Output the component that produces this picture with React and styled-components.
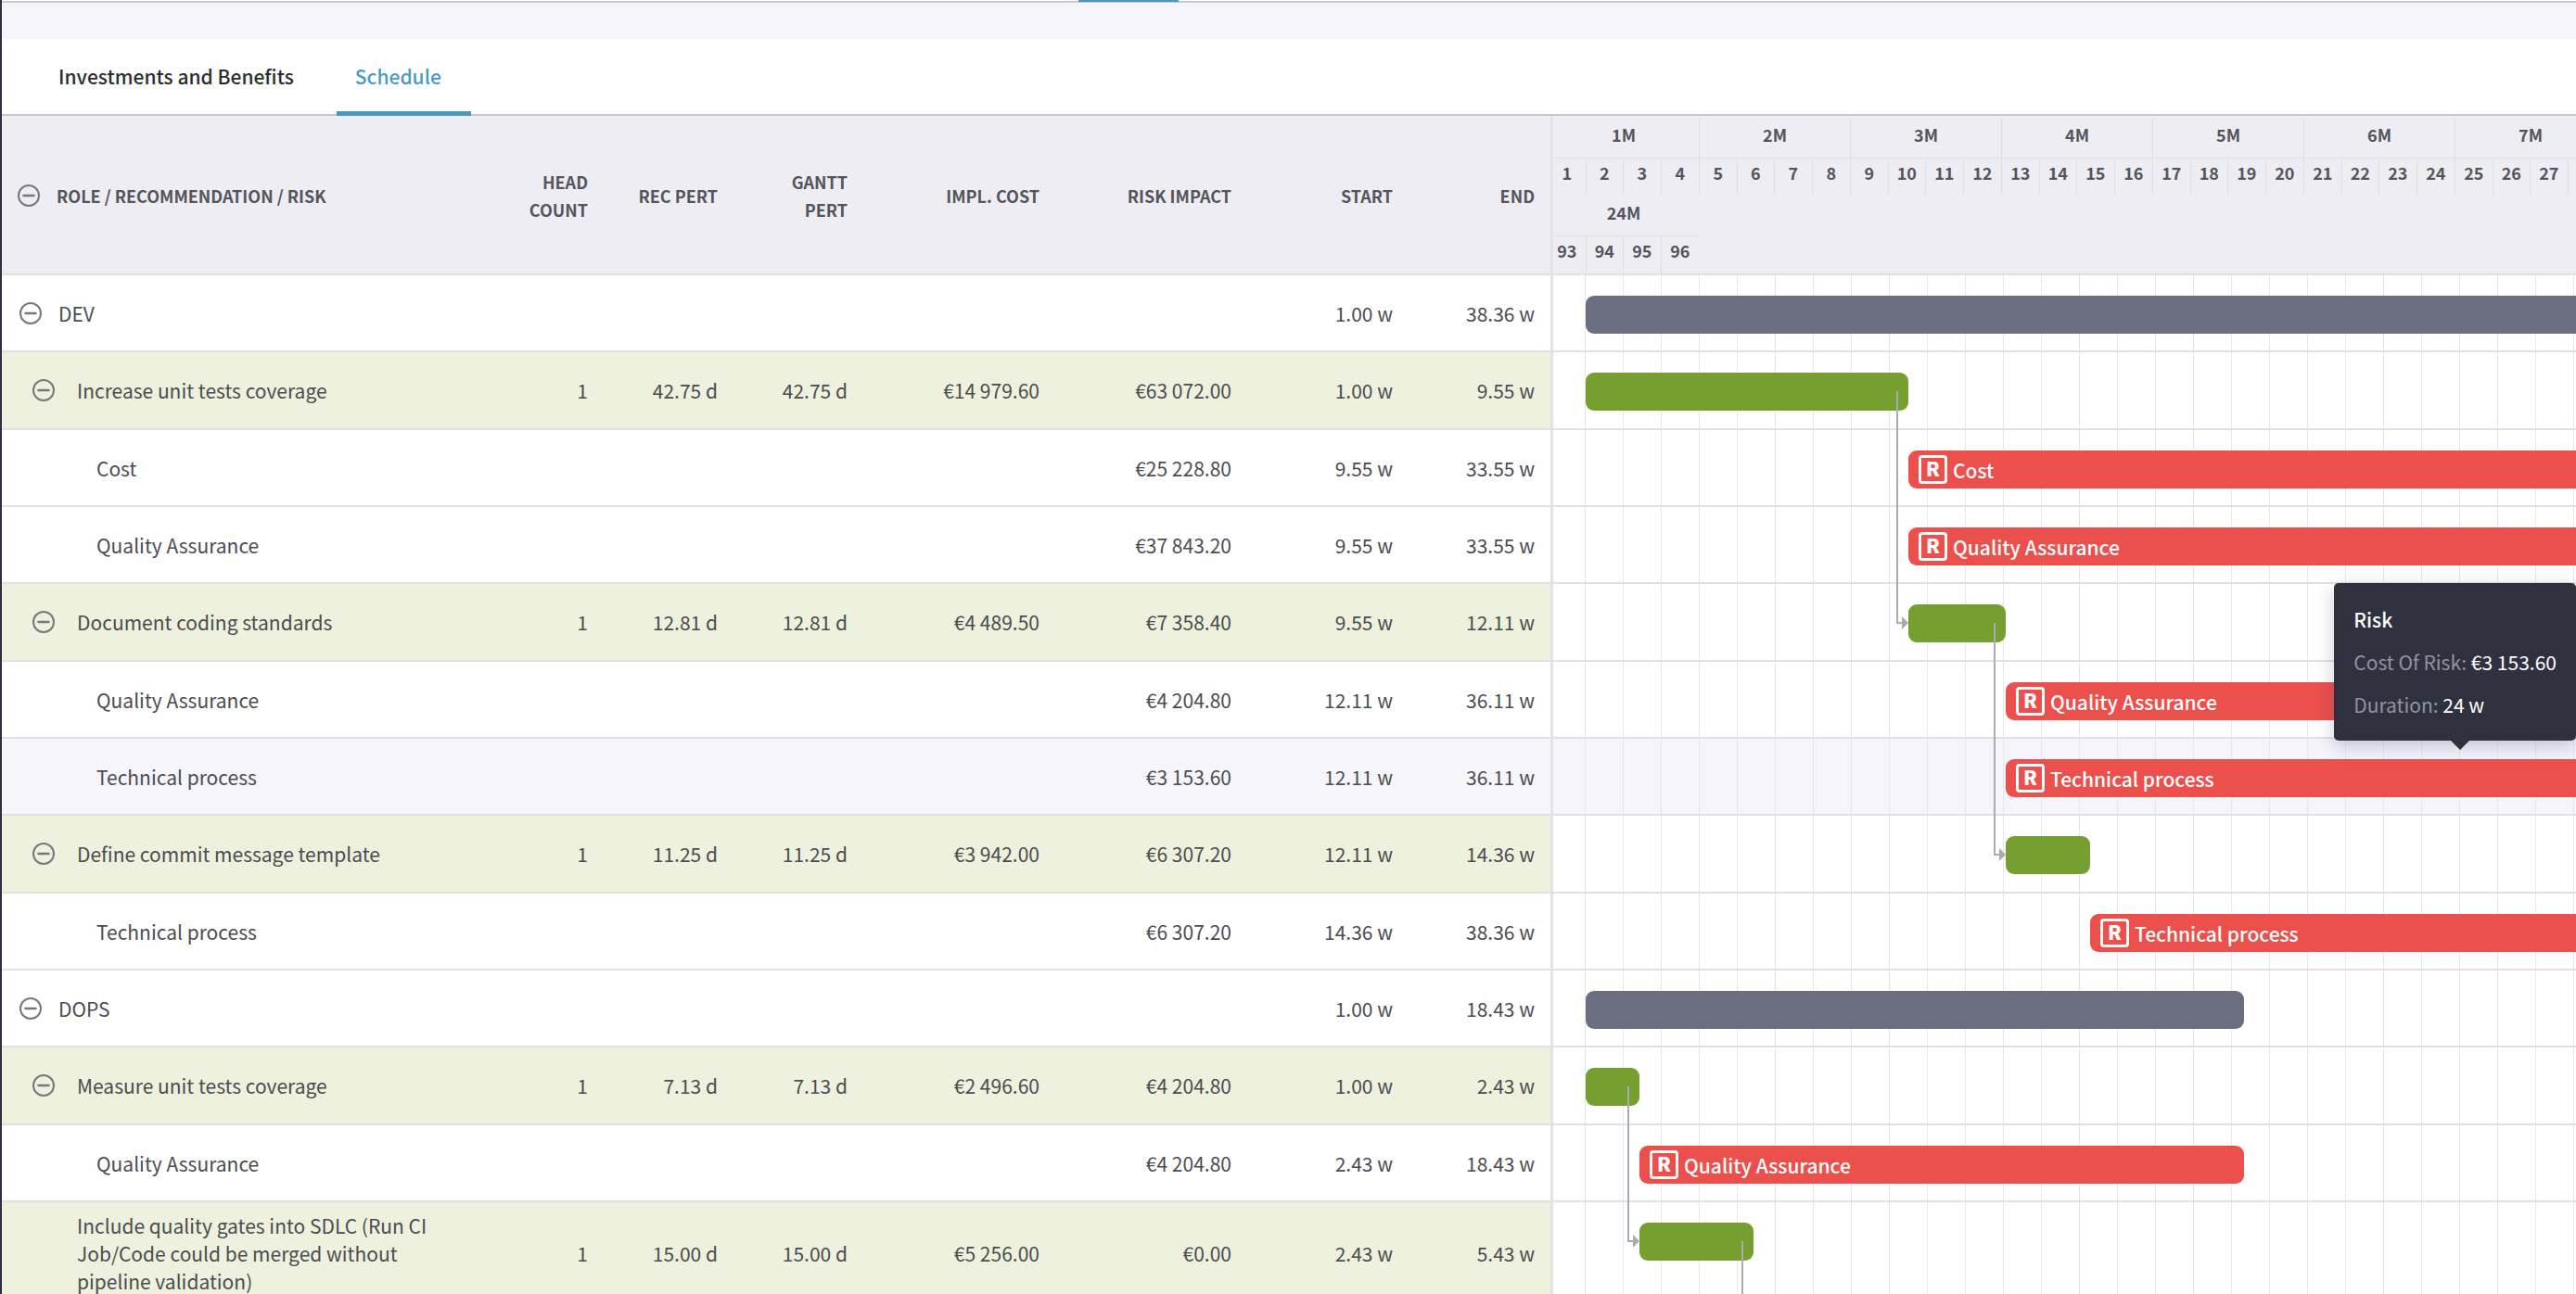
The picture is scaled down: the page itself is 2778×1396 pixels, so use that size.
import React from 'react';
import styled, { createGlobalStyle, css } from 'styled-components';

// one month is 163px wide and holds four weeks, week 1.00 sits 35px into the chart
const MONTH = 163;
const CHART_START = 35;
const toX = week => CHART_START + Math.round((week - 1) * MONTH / 4);

const rows = [
    { level: 0, name: 'DEV', start: 1, end: 38.36 },
    { level: 1, name: 'Increase unit tests coverage', heads: 1, pert: '42.75 d', cost: '€14 979.60', impact: '€63 072.00', start: 1, end: 9.55, link: 250 },
    { level: 2, name: 'Cost', impact: '€25 228.80', start: 9.55, end: 33.55 },
    { level: 2, name: 'Quality Assurance', impact: '€37 843.20', start: 9.55, end: 33.55 },
    { level: 1, name: 'Document coding standards', heads: 1, pert: '12.81 d', cost: '€4 489.50', impact: '€7 358.40', start: 9.55, end: 12.11, link: 250 },
    { level: 2, name: 'Quality Assurance', impact: '€4 204.80', start: 12.11, end: 36.11 },
    { level: 2, name: 'Technical process', impact: '€3 153.60', start: 12.11, end: 36.11, active: true },
    { level: 1, name: 'Define commit message template', heads: 1, pert: '11.25 d', cost: '€3 942.00', impact: '€6 307.20', start: 12.11, end: 14.36 },
    { level: 2, name: 'Technical process', impact: '€6 307.20', start: 14.36, end: 38.36 },
    { level: 0, name: 'DOPS', start: 1, end: 18.43 },
    { level: 1, name: 'Measure unit tests coverage', heads: 1, pert: '7.13 d', cost: '€2 496.60', impact: '€4 204.80', start: 1, end: 2.43, link: 167 },
    { level: 2, name: 'Quality Assurance', impact: '€4 204.80', start: 2.43, end: 18.43 },
    { level: 1, name: 'Include quality gates into SDLC (Run CI Job/Code could be merged without pipeline validation)', heads: 1, pert: '15.00 d', cost: '€5 256.00', impact: '€0.00', start: 2.43, end: 5.43, link: 167, leaf: true },
];

const money = value => value && value.replace(' ', '\u00a0');
const weeks = value => `${value.toFixed(2)} w`;

const Minus = () => (
    <svg width="24" height="24" viewBox="0 0 24 24" fill="none" stroke="#77787d" strokeWidth="2">
        <circle cx="12" cy="12" r="11"/>
        <path d="M6.5 12h11" strokeWidth="2.5" strokeLinecap="round"/>
    </svg>
);

const Month = ({ number }) => (
    <MonthBox>
        <MonthName>{number}M</MonthName>
        <WeekList>
            {[3, 2, 1, 0].map(back => <Week key={back}>{number * 4 - back}</Week>)}
        </WeekList>
    </MonthBox>
);

const Connector = ({ from, drop }) => (
    <Link
        style={{ left: toX(from) - 14 }}
        width="16"
        height={drop + 10}
        fill="none"
        stroke="#a9aab3"
        strokeWidth="2"
    >
        <path d={`M2 0V${drop}H8`}/>
        <path d={`M7 ${drop - 7}L14 ${drop}L7 ${drop + 7}Z`} fill="#a9aab3" stroke="none"/>
    </Link>
);

const Row = ({ row }) => (
    <Tr $level={row.level} $active={row.active}>
        <Td>
            <Name $level={row.level} $leaf={row.leaf}>
                {row.level < 2 && !row.leaf && <Toggle aria-label={`Collapse ${row.name}`}><Minus/></Toggle>}
                {row.name}
            </Name>
        </Td>
        <Td>{row.heads}</Td>
        <Td>{row.pert}</Td>
        <Td>{row.pert}</Td>
        <Td>{money(row.cost)}</Td>
        <Td>{money(row.impact)}</Td>
        <Td>{weeks(row.start)}</Td>
        <EndTd>{weeks(row.end)}</EndTd>
        <ChartTd>
            <Bar $level={row.level} style={{ left: toX(row.start), width: toX(row.end) - toX(row.start) }}>
                {row.level === 2 && <><Badge>R</Badge>{row.name}</>}
            </Bar>
            {row.link && <Connector from={row.end} drop={row.link}/>}
            {row.active && (
                <Tooltip role="tooltip">
                    <strong>Risk</strong>
                    <p>Cost Of Risk: <b>{money(row.impact)}</b></p>
                    <p>Duration: <b>24 w</b></p>
                </Tooltip>
            )}
        </ChartTd>
    </Tr>
);

const App = () => (
    <Page>
        <GlobalStyle/>
        <TopEdge><TopMarker/></TopEdge>
        <Tabs>
            <Tab href="#investments">Investments and Benefits</Tab>
            <Tab href="#schedule" $active>Schedule</Tab>
        </Tabs>
        <Table>
            <colgroup>
                <Col $width={512}/>
                <Col $width={140}/>
                <Col $width={140}/>
                <Col $width={140}/>
                <Col $width={207}/>
                <Col $width={207}/>
                <Col $width={174}/>
                <Col $width={153}/>
                <col/>
            </colgroup>
            <thead>
                <tr>
                    <Th>
                        <HeadName>
                            <Toggle aria-label="Collapse all"><Minus/></Toggle>
                            Role / Recommendation / Risk
                        </HeadName>
                    </Th>
                    <Th>Head<br/>Count</Th>
                    <Th>Rec Pert</Th>
                    <Th>Gantt<br/>Pert</Th>
                    <Th>Impl. Cost</Th>
                    <Th>Risk Impact</Th>
                    <Th>Start</Th>
                    <EndTh>End</EndTh>
                    <ChartTh>
                        <Timeline>
                            {[1, 2, 3, 4, 5, 6, 7].map(number => <Month key={number} number={number}/>)}
                        </Timeline>
                        <Timeline>
                            <Month number={24}/>
                        </Timeline>
                    </ChartTh>
                </tr>
            </thead>
            <tbody>
                {rows.map((row, index) => <Row key={index} row={row}/>)}
            </tbody>
        </Table>
    </Page>
);

export default App;

const GlobalStyle = createGlobalStyle`
    * {
        box-sizing: border-box;
    }
    body {
        margin: 0;
        overflow: hidden;
        background: #fff;
        color: #4b4c51;
        font-family: "Noto Sans CJK SC", "Noto Sans", sans-serif;
        font-size: 21px;
        line-height: 30px;
    }
`;

const Page = styled.main`
    height: 100vh;
    overflow: hidden;
    border-left: 2px solid #2e303f;
`;

const TopEdge = styled.div`
    height: 3px;
    border-bottom: 2px solid #c9ccd0;
`;

const TopMarker = styled.div`
    width: 108px;
    height: 2px;
    margin-left: 1161px;
    background: #4a9abf;
`;

const Tabs = styled.nav`
    display: flex;
    gap: 14px;
    height: 122px;
    padding-left: 41px;
    border-top: 39px solid #f5f5fb;
    box-shadow: inset 0 -2px #c5c7cb;
`;

const Tab = styled.a`
    padding: 25px 32px 0 20px;
    border-bottom: 5px solid ${props => props.$active ? '#4a9abf' : 'transparent'};
    color: ${props => props.$active ? '#4a9abf' : '#2c2d31'};
    font-weight: 500;
    text-decoration: none;
`;

const Table = styled.table`
    width: 100%;
    table-layout: fixed;
    border-spacing: 0;
`;

const Col = styled.col`
    width: ${props => props.$width}px;
`;

const separator = css`
    border-right: 3px solid #e2e2e7;
    padding-right: 17px;
`;

const Th = styled.th`
    height: 172px;
    padding: 1px 20px 0;
    border-bottom: 2px solid #e1e1e5;
    background: #eeedf4;
    color: #54555b;
    font-size: 18px;
    font-weight: 700;
    text-align: right;
    text-transform: uppercase;
    &:first-child {
        padding-left: 0;
    }
`;

const EndTh = styled(Th)`
    ${separator}
`;

const ChartTh = styled(Th)`
    padding: 2px 0 0;
    vertical-align: top;
`;

const Timeline = styled.div`
    display: flex;
    overflow: hidden;
`;

const MonthBox = styled.div`
    flex: none;
    width: ${MONTH}px;
    border-right: 1px solid #e0e0e7;
    text-align: center;
    &:first-child {
        margin-left: -5px;
    }
    &:only-child {
        border-color: transparent;
    }
`;

const MonthName = styled.div`
    height: 44px;
    padding-top: 3px;
    border-bottom: 1px solid #e0e0e7;
`;

const WeekList = styled.div`
    display: grid;
    grid-template-columns: repeat(4, 1fr);
`;

const Week = styled.span`
    height: 40px;
    border-right: 1px solid #e0e0e7;
    &:last-child {
        border: 0;
    }
`;

const Td = styled.td`
    padding: 0 20px;
    border-bottom: 2px solid #e0e1e4;
    text-align: right;
    &:first-child {
        padding-left: 0;
    }
`;

const EndTd = styled(Td)`
    ${separator}
`;

const ChartTd = styled(Td)`
    position: relative;
    padding: 0;
    background: linear-gradient(90deg, #e6e6ec 1px, transparent 1px) 34px 0 / 41px 100%;
`;

const Tr = styled.tr`
    height: ${props => props.$level === 1 ? 84 : 83}px;
    ${props => props.$active && css`background: #f5f5fb;`}
    ${props => props.$level === 1 && css`
        ${Td}:not(${ChartTd}) {
            background: #edf1dd;
        }
    `}
`;

const Name = styled.div`
    display: flex;
    align-items: center;
    gap: ${props => props.$level === 1 ? 24 : 18}px;
    padding: 10px 0;
    padding-left: ${props => props.$leaf ? 81 : [19, 33, 102][props.$level]}px;
    text-align: left;
`;

const HeadName = styled(Name)`
    padding-left: 17px;
`;

const Toggle = styled.button`
    display: flex;
    flex: none;
    padding: 0;
    border: 0;
    background: none;
    cursor: pointer;
`;

const Bar = styled.div`
    position: absolute;
    top: 22px;
    display: flex;
    align-items: center;
    gap: 6px;
    height: 41px;
    padding-left: 11px;
    border-radius: 9px;
    background: ${props => ['#6b6d80', '#759f2f', '#eb504c'][props.$level]};
    color: #fff;
    font-weight: 500;
    white-space: nowrap;
`;

const Badge = styled.span`
    width: 31px;
    height: 31px;
    border: 3px solid #fff;
    border-radius: 4px;
    font-weight: 900;
    line-height: 23px;
    text-align: center;
`;

const Link = styled.svg`
    position: absolute;
    top: 42px;
    z-index: 1;
`;

const Tooltip = styled.div`
    position: absolute;
    right: 0;
    bottom: 79px;
    z-index: 2;
    display: grid;
    gap: 16px;
    padding: 24px 21px;
    border-radius: 5px;
    background: #30313f;
    box-shadow: 0 6px 20px rgba(50, 50, 100, 0.25);
    color: #9392a3;
    text-align: left;
    white-space: nowrap;
    strong {
        color: #fff;
        font-weight: 500;
    }
    p {
        margin: 0;
    }
    b {
        color: #fff;
        font-weight: 400;
    }
    &::after {
        content: "";
        position: absolute;
        top: 100%;
        right: 115px;
        border: 10px solid transparent;
        border-top-color: #30313f;
        border-bottom: 0;
    }
`;
